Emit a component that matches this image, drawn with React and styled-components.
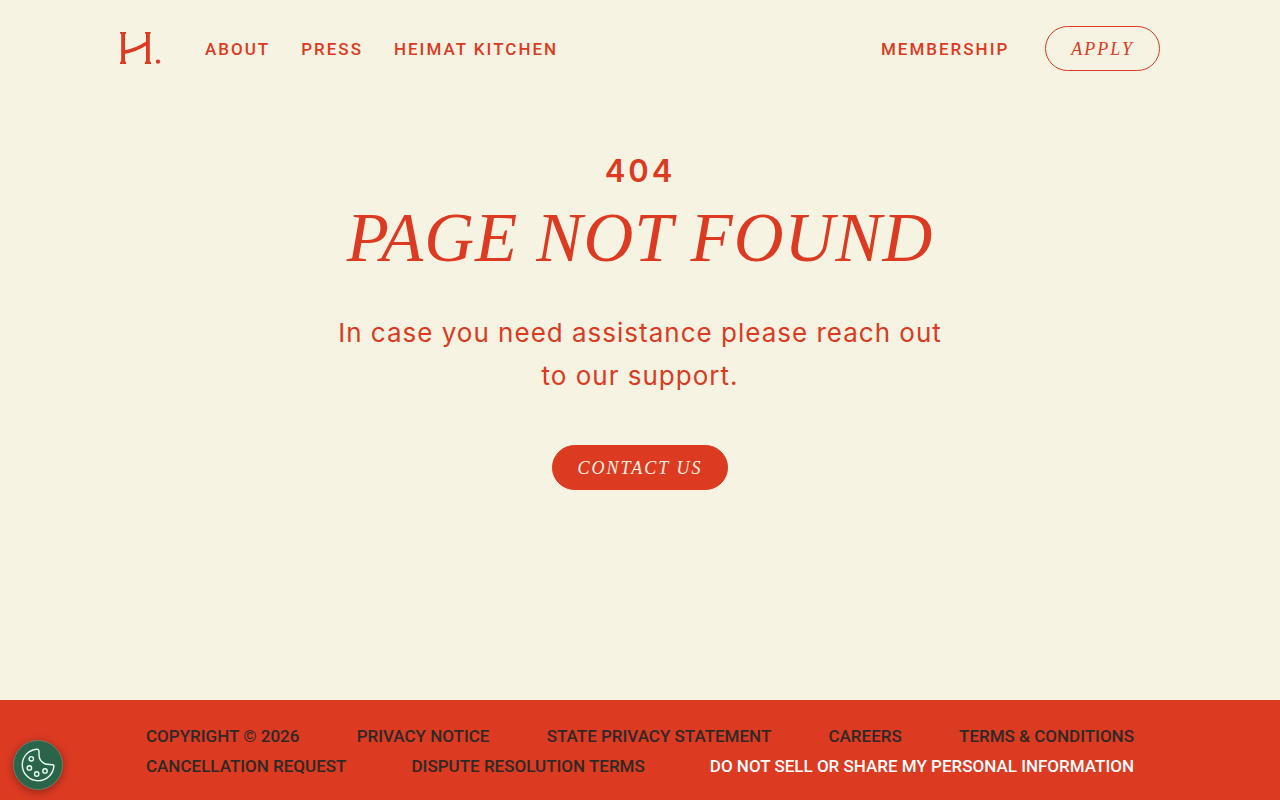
import React from 'react';
import styled, { createGlobalStyle } from 'styled-components';

const footerLinks = [
  { text: 'Copyright © 2026' },
  { text: 'Privacy Notice' },
  { text: 'State Privacy Statement' },
  { text: 'Careers' },
  { text: 'Terms & Conditions' },
  { text: 'Cancellation Request' },
  { text: 'Dispute Resolution Terms' },
  { text: 'Do Not Sell Or Share My Personal Information', light: true },
];

function Logo() {
  return (
    <svg width="41" height="32" viewBox="0 0 41 32" fill="#dd3a22" aria-hidden="true">
      <path d="M0 0h6v1.500l-1 .5v27l1 1.500V32H0v-1.500L1.200 29V2L0 1.500zM25 0h5.700v1.500l-.9.500v27l1.200 1.500V32h-6.200v-1.500L26 29V2l-1-.5z" />
      <path d="M4 20.200C12 19 20 15.500 28 10.500" fill="none" stroke="#dd3a22" strokeWidth="3.400" />
      <circle cx="38" cy="29.600" r="2.200" />
    </svg>
  );
}

function CookieIcon() {
  return (
    <svg width="34" height="34" viewBox="0 0 34 34" fill="none" stroke="#e9fff4" strokeWidth="1.400" strokeLinejoin="round" aria-hidden="true">
      <path d="M15.700 1.200C7.600 1.800 1.300 8.500 1.300 16.900c0 8.700 7 15.800 15.800 15.800 8.300 0 15.200-6.400 15.800-14.600.1-.8-.4-1.300-1.200-1.400-3.200-.1-6.100-.1-8.400-1.200C19.800 13.800 18 10.400 18 6.600c0-1.300.2-2.600-.1-4-.2-1-1-1.500-2.200-1.400z" />
      <circle cx="10.300" cy="10.800" r="2.200" />
      <circle cx="8.400" cy="19.900" r="2.200" />
      <circle cx="15.700" cy="26" r="2.200" />
      <circle cx="24" cy="22.900" r="2.200" />
    </svg>
  );
}

function App() {
  return (
    <>
      <GlobalStyle />
      <Page>
        <Header>
          <Menu>
            <LogoLink href="#" aria-label="Heimat">
              <Logo />
            </LogoLink>
            <NavLink href="#">About</NavLink>
            <NavLink href="#">Press</NavLink>
            <NavLink href="#">Heimat Kitchen</NavLink>
          </Menu>
          <Actions>
            <NavLink href="#">Membership</NavLink>
            <PillLink href="#">Apply</PillLink>
          </Actions>
        </Header>
        <Main>
          <Code>404</Code>
          <Title>Page not found</Title>
          <Text>In case you need assistance please reach out to our support.</Text>
          <PillLink href="#" $filled>
            Contact us
          </PillLink>
        </Main>
        <Footer>
          <FooterList>
            {footerLinks.map((link) => (
              <li key={link.text}>
                <FooterLink href="#" $light={link.light}>
                  {link.text}
                </FooterLink>
              </li>
            ))}
          </FooterList>
        </Footer>
        <CookieButton type="button" aria-label="Cookie settings">
          <CookieIcon />
        </CookieButton>
      </Page>
    </>
  );
}

export default App;

const GlobalStyle = createGlobalStyle`
  * {
    box-sizing: border-box;
  }
  body {
    margin: 0;
    background: #f6f3e2;
    color: #dd3a22;
    font-family: Roboto, sans-serif;
  }
`;

const Page = styled.div`
  display: flex;
  flex-direction: column;
  min-height: 100vh;
`;

const Header = styled.header`
  display: flex;
  justify-content: space-between;
  align-items: center;
  flex-wrap: wrap;
  gap: 16px;
  width: 100%;
  max-width: 1088px;
  margin: 0 auto;
  padding: 26px 24px;
`;

const Menu = styled.nav`
  display: flex;
  align-items: center;
  flex-wrap: wrap;
  gap: 31px;
`;

const LogoLink = styled.a`
  display: flex;
  padding: 0 13px 2px 0;
`;

const Actions = styled.div`
  display: flex;
  align-items: center;
  gap: 36px;
`;

const NavLink = styled.a`
  color: inherit;
  font-size: 17px;
  font-weight: 500;
  line-height: 24px;
  letter-spacing: 2px;
  text-decoration: none;
  text-transform: uppercase;
`;

const PillLink = styled.a`
  padding: 11px 25px 9px;
  border: 1px solid #dd3a22;
  border-radius: 24px;
  background: ${(props) => (props.$filled ? '#dd3a22' : 'transparent')};
  color: ${(props) => (props.$filled ? '#f6f3e2' : '#dd3a22')};
  font-family: 'Liberation Serif', serif;
  font-size: 18px;
  font-style: italic;
  line-height: 23px;
  letter-spacing: 2px;
  text-decoration: none;
  text-transform: uppercase;
`;

const Main = styled.main`
  display: flex;
  flex: 1;
  flex-direction: column;
  align-items: center;
  padding: 54px 24px;
  text-align: center;
`;

const Code = styled.p`
  margin: 0;
  font-family: Inter, sans-serif;
  font-size: 31px;
  font-weight: 600;
  line-height: 40px;
  letter-spacing: 3px;
`;

const Title = styled.h1`
  margin: 7px 0 33px;
  font-family: 'Liberation Serif', serif;
  font-size: 69px;
  font-style: italic;
  font-weight: 400;
  line-height: 80px;
  letter-spacing: 1px;
  text-transform: uppercase;
`;

const Text = styled.p`
  max-width: 620px;
  margin: 0 0 48px;
  font-family: Inter, sans-serif;
  font-size: 26px;
  line-height: 43px;
  letter-spacing: 1px;
`;

const Footer = styled.footer`
  padding: 21px 24px 19px;
  background: #dd3a22;
`;

const FooterList = styled.ul`
  display: flex;
  flex-wrap: wrap;
  justify-content: space-between;
  column-gap: 32px;
  max-width: 988px;
  margin: 0 auto;
  padding: 0;
  font-size: 17px;
  line-height: 30px;
  list-style: none;
`;

const FooterLink = styled.a`
  color: ${(props) => (props.$light ? '#ffffff' : '#2d2926')};
  font-weight: 500;
  text-decoration: none;
  text-transform: uppercase;
`;

const CookieButton = styled.button`
  position: fixed;
  left: 13px;
  bottom: 10px;
  display: flex;
  align-items: center;
  justify-content: center;
  width: 50px;
  height: 50px;
  padding: 0;
  border: 1px solid #6d7d66;
  border-radius: 50%;
  background: #2a6449;
  box-shadow: 0 2px 8px rgba(0, 0, 0, 0.35);
  cursor: pointer;
`;
